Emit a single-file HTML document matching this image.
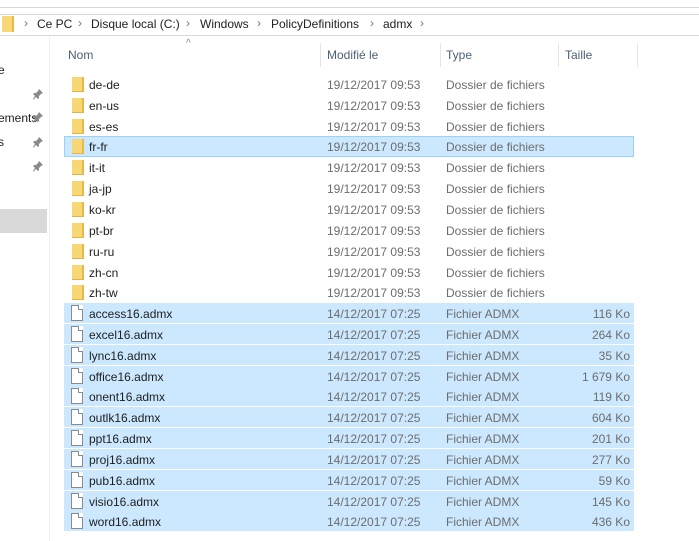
<!DOCTYPE html>
<html><head><meta charset="utf-8"><style>
*{margin:0;padding:0;box-sizing:border-box}
body{width:699px;height:541px;overflow:hidden;background:#fff;font-family:"Liberation Sans",sans-serif;font-size:12px;color:#1e1e1e;position:relative}
.a{position:absolute}
.row{position:absolute;left:64px;width:570px;height:20px}
.sel{background:#cce8ff}
.fr{border:1px solid #99d1ff}
.row span{position:absolute;top:4px;white-space:nowrap}
.n{left:25px}
.d{left:263px;color:#6d6d6d}
.t{left:382px;color:#6d6d6d}
.s{right:4px;color:#6d6d6d}
.fo{position:absolute;left:8px;top:3px;width:12px;height:15px;background:#f8d775;border-right:2px solid #e8b948;border-bottom:1px solid #e3b34a}
.fi{position:absolute;left:7px;top:2px;width:12px;height:16px;border:1px solid #8a8a8a;background:#fff}
.fi:after{content:"";position:absolute;right:-1px;top:-1px;width:4px;height:4px;background:#fff;border-left:1px solid #8a8a8a;border-bottom:1px solid #8a8a8a}
.pin{position:absolute;left:32px}
.h{position:absolute;top:48px;color:#4c607a}
.hs{position:absolute;top:43px;width:1px;height:24px;background:#e5e5e5}
.bc{position:absolute;top:17px;white-space:nowrap}
.ch{position:absolute;top:16px;color:#777}
</style></head><body>
<div class="a" style="left:0;top:7px;width:699px;height:1px;background:#d9d9d9"></div>
<div class="a" style="left:0;top:14px;width:699px;height:1px;background:#d9d9d9"></div>
<div class="a" style="left:0;top:35px;width:699px;height:1px;background:#d9d9d9"></div>
<div class="a" style="left:2px;top:16px;width:12px;height:16px;background:#f8d775;border-right:2px solid #e8b948"></div>
<span class="ch" style="left:24px">›</span><span class="bc" style="left:37px">Ce PC</span>
<span class="ch" style="left:78px">›</span><span class="bc" style="left:91px">Disque local (C:)</span>
<span class="ch" style="left:186px">›</span><span class="bc" style="left:200px">Windows</span>
<span class="ch" style="left:257px">›</span><span class="bc" style="left:271px">PolicyDefinitions</span>
<span class="ch" style="left:370px">›</span><span class="bc" style="left:383px">admx</span>
<span class="ch" style="left:420px">›</span>
<div class="a" style="left:49px;top:36px;width:1px;height:505px;background:#f0f0f0"></div>
<div class="a" style="left:-2px;top:63px">e</div>
<div class="a" style="left:-2px;top:111px">ements</div>
<div class="a" style="left:-2px;top:135px">s</div>
<svg class="pin" style="top:88px" width="12" height="12" viewBox="0 0 12 12"><path d="M7 1l4 4-2 1-2 2 0 2-1 1-2-2-3 3 0-1 2-3-2-2 1-1 2 0 2-2z" fill="#8a8a8a"/></svg>
<svg class="pin" style="top:111px" width="12" height="12" viewBox="0 0 12 12"><path d="M7 1l4 4-2 1-2 2 0 2-1 1-2-2-3 3 0-1 2-3-2-2 1-1 2 0 2-2z" fill="#8a8a8a"/></svg>
<svg class="pin" style="top:136px" width="12" height="12" viewBox="0 0 12 12"><path d="M7 1l4 4-2 1-2 2 0 2-1 1-2-2-3 3 0-1 2-3-2-2 1-1 2 0 2-2z" fill="#8a8a8a"/></svg>
<svg class="pin" style="top:160px" width="12" height="12" viewBox="0 0 12 12"><path d="M7 1l4 4-2 1-2 2 0 2-1 1-2-2-3 3 0-1 2-3-2-2 1-1 2 0 2-2z" fill="#8a8a8a"/></svg>
<div class="a" style="left:0;top:209px;width:47px;height:24px;background:#d9d9d9"></div>
<div class="a" style="left:186px;top:38px;color:#888;font-size:10px">^</div>
<div class="h" style="left:68px">Nom</div>
<div class="hs" style="left:320px"></div>
<div class="h" style="left:327px">Modifié le</div>
<div class="hs" style="left:440px"></div>
<div class="h" style="left:446px">Type</div>
<div class="hs" style="left:558px"></div>
<div class="h" style="left:565px">Taille</div>
<div class="hs" style="left:637px"></div>

<div class="row" style="top:74px"><i class="fo"></i><span class="n">de-de</span><span class="d">19/12/2017 09:53</span><span class="t">Dossier de fichiers</span></div>
<div class="row" style="top:95px"><i class="fo"></i><span class="n">en-us</span><span class="d">19/12/2017 09:53</span><span class="t">Dossier de fichiers</span></div>
<div class="row" style="top:116px"><i class="fo"></i><span class="n">es-es</span><span class="d">19/12/2017 09:53</span><span class="t">Dossier de fichiers</span></div>
<div class="row sel fr" style="top:136px;height:21px"><i class="fo" style="left:7px;top:2px"></i><span class="n" style="left:24px;top:3px">fr-fr</span><span class="d" style="left:262px;top:3px">19/12/2017 09:53</span><span class="t" style="left:381px;top:3px">Dossier de fichiers</span></div>
<div class="row" style="top:157px"><i class="fo"></i><span class="n">it-it</span><span class="d">19/12/2017 09:53</span><span class="t">Dossier de fichiers</span></div>
<div class="row" style="top:178px"><i class="fo"></i><span class="n">ja-jp</span><span class="d">19/12/2017 09:53</span><span class="t">Dossier de fichiers</span></div>
<div class="row" style="top:199px"><i class="fo"></i><span class="n">ko-kr</span><span class="d">19/12/2017 09:53</span><span class="t">Dossier de fichiers</span></div>
<div class="row" style="top:220px"><i class="fo"></i><span class="n">pt-br</span><span class="d">19/12/2017 09:53</span><span class="t">Dossier de fichiers</span></div>
<div class="row" style="top:241px"><i class="fo"></i><span class="n">ru-ru</span><span class="d">19/12/2017 09:53</span><span class="t">Dossier de fichiers</span></div>
<div class="row" style="top:262px"><i class="fo"></i><span class="n">zh-cn</span><span class="d">19/12/2017 09:53</span><span class="t">Dossier de fichiers</span></div>
<div class="row" style="top:282px"><i class="fo"></i><span class="n">zh-tw</span><span class="d">19/12/2017 09:53</span><span class="t">Dossier de fichiers</span></div>

<div class="row sel" style="top:303px"><i class="fi"></i><span class="n">access16.admx</span><span class="d">14/12/2017 07:25</span><span class="t">Fichier ADMX</span><span class="s">116 Ko</span></div>
<div class="row sel" style="top:324px"><i class="fi"></i><span class="n">excel16.admx</span><span class="d">14/12/2017 07:25</span><span class="t">Fichier ADMX</span><span class="s">264 Ko</span></div>
<div class="row sel" style="top:345px"><i class="fi"></i><span class="n">lync16.admx</span><span class="d">14/12/2017 07:25</span><span class="t">Fichier ADMX</span><span class="s">35 Ko</span></div>
<div class="row sel" style="top:366px"><i class="fi"></i><span class="n">office16.admx</span><span class="d">14/12/2017 07:25</span><span class="t">Fichier ADMX</span><span class="s">1 679 Ko</span></div>
<div class="row sel" style="top:386px"><i class="fi"></i><span class="n">onent16.admx</span><span class="d">14/12/2017 07:25</span><span class="t">Fichier ADMX</span><span class="s">119 Ko</span></div>
<div class="row sel" style="top:407px"><i class="fi"></i><span class="n">outlk16.admx</span><span class="d">14/12/2017 07:25</span><span class="t">Fichier ADMX</span><span class="s">604 Ko</span></div>
<div class="row sel" style="top:428px"><i class="fi"></i><span class="n">ppt16.admx</span><span class="d">14/12/2017 07:25</span><span class="t">Fichier ADMX</span><span class="s">201 Ko</span></div>
<div class="row sel" style="top:449px"><i class="fi"></i><span class="n">proj16.admx</span><span class="d">14/12/2017 07:25</span><span class="t">Fichier ADMX</span><span class="s">277 Ko</span></div>
<div class="row sel" style="top:470px"><i class="fi"></i><span class="n">pub16.admx</span><span class="d">14/12/2017 07:25</span><span class="t">Fichier ADMX</span><span class="s">59 Ko</span></div>
<div class="row sel" style="top:491px"><i class="fi"></i><span class="n">visio16.admx</span><span class="d">14/12/2017 07:25</span><span class="t">Fichier ADMX</span><span class="s">145 Ko</span></div>
<div class="row sel" style="top:511px"><i class="fi"></i><span class="n">word16.admx</span><span class="d">14/12/2017 07:25</span><span class="t">Fichier ADMX</span><span class="s">436 Ko</span></div>
</body></html>
